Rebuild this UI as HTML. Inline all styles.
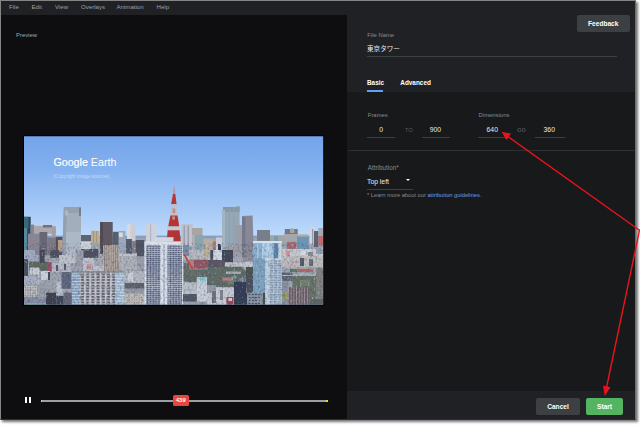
<!DOCTYPE html>
<html><head><meta charset="utf-8">
<style>
*{margin:0;padding:0;box-sizing:border-box}
html,body{width:640px;height:425px;background:#fff;overflow:hidden}
body{font-family:"Liberation Sans","Noto Sans CJK JP",sans-serif;position:relative}
#frame{position:absolute;left:0;top:0;width:636px;height:420px;background:#0e0e10;border:1px solid #858585;border-right-color:#6e6e6e;border-bottom-color:#2e2e30;box-shadow:1.5px 1.5px 2.5px rgba(0,0,0,.55);overflow:hidden}
#app{position:absolute;left:-1px;top:-1px;width:640px;height:425px}
.t{position:absolute;white-space:nowrap;line-height:1;transform:translateY(-50%)}
#menu{position:absolute;left:0;top:0;width:640px;height:15px;background:#202124}
#menu .t{color:#9aa0a6;font-size:6.1px;top:6.5px}
#right{position:absolute;left:347px;top:15px;width:293.5px;height:410px;background:#18191b}
#rhead{position:absolute;left:0;top:0;width:294px;height:76.5px;background:#202124}
#rfoot{position:absolute;left:0;top:375.5px;width:294px;height:40px;background:#202124}
.lbl{color:#868c92;font-size:5.9px}
.val{color:#e8eaed;font-size:6.8px}
.ul{position:absolute;height:1px;background:#3c4043}
.btn{position:absolute;border-radius:2px;color:#fff;font-weight:bold;font-size:6.6px;text-align:center}
</style></head><body>
<div id="frame"><div id="app">
<div id="menu">
<span class="t" style="left:9px">File</span>
<span class="t" style="left:31.5px">Edit</span>
<span class="t" style="left:55px">View</span>
<span class="t" style="left:81px">Overlays</span>
<span class="t" style="left:116.5px">Animation</span>
<span class="t" style="left:156.5px">Help</span>
</div>
<span class="t lbl" style="left:16px;top:36.3px;color:#a0a6ac">Preview</span>
<!--PHOTO_START--><svg style="position:absolute;left:0;top:0" width="640" height="425" viewBox="0 0 640 425">
<defs>
<linearGradient id="sky" x1="0" y1="136" x2="0" y2="240" gradientUnits="userSpaceOnUse">
<stop offset="0" stop-color="#73a3ea"/><stop offset=".33" stop-color="#84b1ee"/><stop offset=".62" stop-color="#9fc5f5"/><stop offset=".95" stop-color="#bcd9fb"/>
</linearGradient>
<clipPath id="pc"><rect x="24" y="136.2" width="299.2" height="168.4"/></clipPath>
<filter id="bl" x="0" y="0" width="640" height="425" filterUnits="userSpaceOnUse"><feGaussianBlur stdDeviation="0.4" result="b"/><feColorMatrix in="b" type="matrix" values="0.92 0 0 0 0  0 0.955 0 0 0  0 0 1.0 0 0.015  0 0 0 1 0" result="c"/><feTurbulence x="24" y="243" width="300" height="62" type="fractalNoise" baseFrequency="0.5 0.36" numOctaves="2" seed="7" result="n"/><feColorMatrix in="n" type="matrix" values="0 0 0 0 0.05  0 0 0 0 0.06  0 0 0 0 0.1  1.5 0 0 0 -0.68" result="na"/><feComposite in="na" in2="c" operator="in" result="nb"/><feColorMatrix x="24" y="243" width="300" height="62" in="n" type="matrix" values="0 0 0 0 .92  0 0 0 0 .94  0 0 0 0 1  0 -1.3 0 0 0.45" result="wa"/><feComposite in="wa" in2="c" operator="in" result="wb"/><feMerge><feMergeNode in="c"/><feMergeNode in="nb"/><feMergeNode in="wb"/></feMerge></filter>

<pattern id="pwhite" x="146" y="245" width="2.86" height="2.06" patternUnits="userSpaceOnUse"><rect width="2.86" height="2.06" fill="#dfe2e8"/><rect x="0.45" y="0.4" width="2.05" height="1.58" fill="#465068"/></pattern>
<pattern id="papt" x="79.7" y="272.6" width="5.2" height="2.8" patternUnits="userSpaceOnUse"><rect width="5.2" height="2.8" fill="#cfc8c6"/><rect x="1.2" y="0.9" width="3.1" height="1.7" fill="#5a6270"/></pattern>
<pattern id="pglass" x="0" y="272.6" width="4" height="2.8" patternUnits="userSpaceOnUse"><rect width="4" height="2.8" fill="#8ca6c0"/><rect width="4" height="0.8" fill="#d8e0e8"/></pattern>
<pattern id="pglass2" x="0" y="272.6" width="4" height="2.8" patternUnits="userSpaceOnUse"><rect width="4" height="2.8" fill="#a6bed0"/><rect width="4" height="0.8" fill="#dde4ea"/></pattern>
<pattern id="pbeige" x="103.4" y="245" width="2.2" height="4" patternUnits="userSpaceOnUse"><rect width="2.2" height="4" fill="#b8aa9c"/><rect x="0.7" width="0.8" height="4" fill="#978a80"/></pattern>
<pattern id="pwin2" x="24" y="286" width="2.6" height="2.8" patternUnits="userSpaceOnUse"><rect width="2.6" height="2.8" fill="#ccc8c4"/><rect x="0.6" y="0.8" width="1.2" height="1.4" fill="#7a7c84"/></pattern>
<pattern id="pwin3" x="126" y="296" width="2.4" height="2.6" patternUnits="userSpaceOnUse"><rect width="2.4" height="2.6" fill="#cac2ba"/><rect x="0.6" y="0.8" width="1.1" height="1.2" fill="#9a9088"/></pattern>
<pattern id="pwin4" x="248" y="293" width="3.2" height="3" patternUnits="userSpaceOnUse"><rect width="3.2" height="3" fill="#98a0ac"/><rect x="0.6" y="0.8" width="2" height="1.4" fill="#4a525e"/></pattern>
<pattern id="pbrown" x="288" y="287.5" width="2.7" height="3" patternUnits="userSpaceOnUse"><rect width="2.7" height="3" fill="#6a5a5a"/><rect width="0.8" height="3" fill="#b0a8a8"/><rect width="2.7" height="0.5" fill="#8a7c7c"/></pattern>
<pattern id="pwt" x="269.2" y="259.6" width="4.2" height="2.4" patternUnits="userSpaceOnUse"><rect width="4.2" height="2.4" fill="#d2dae2"/><rect x="0.5" y="0.55" width="3.4" height="1.6" fill="#869eb2"/></pattern>

</defs>
<rect x="23" y="135.2" width="301.2" height="170.4" fill="#000"/>
<g clip-path="url(#pc)">
<rect x="24" y="136" width="300" height="170" fill="url(#sky)"/>
<g filter="url(#bl)"><rect x="24.0" y="236.0" width="299.0" height="69.0" fill="#a4a8ae"/><rect x="24.0" y="235.6" width="299.0" height="2.6" fill="#8aa2bc"/><polygon points="173.7,186.2 174.6,186.2 175.3,193.9 173,193.9" fill="#b89c9c"/><polygon points="173,193.9 175.3,193.9 176.6,204.2 171.1,204.2" fill="#bc3828"/><polygon points="171.1,204.2 176.6,204.2 177.5,215.4 170.4,215.4" fill="#c6c4ca"/><rect x="172.5" y="208.5" width="2.8" height="4.6" fill="#cf9088"/><polygon points="170.4,215.4 177.5,215.4 179.3,226.5 168.2,226.5" fill="#bc3626"/><rect x="172.3" y="216.4" width="2.6" height="3.2" fill="#cc968c"/><rect x="166.7" y="226.5" width="13.3" height="3.7" fill="#ccccd2"/><polygon points="167.7,230.2 179.6,230.2 180.6,241.5 166.6,241.5" fill="#b83424"/><rect x="24.0" y="216.8" width="6.7" height="35.2" fill="#2c444c"/><rect x="24.0" y="216.8" width="4.5" height="11.2" fill="#3a6c74"/><rect x="24.0" y="228.0" width="3.2" height="23.0" fill="#5a8aa0"/><rect x="30.7" y="224.6" width="3.6" height="27.4" fill="#8a8890"/><rect x="34.3" y="225.9" width="21.4" height="7.9" fill="#b2aaa8"/><rect x="43.0" y="225.0" width="9.0" height="2.5" fill="#77747a"/><rect x="51.8" y="227.0" width="3.9" height="11.0" fill="#a8a0a0"/><rect x="28.0" y="233.6" width="12.8" height="21.4" fill="#908890"/><rect x="39.5" y="232.0" width="7.8" height="23.0" fill="#6a6a72"/><rect x="47.3" y="237.5" width="8.4" height="17.5" fill="#827a82"/><rect x="55.7" y="237.0" width="7.1" height="19.0" fill="#5a525a"/><rect x="58.0" y="240.0" width="4.5" height="11.7" fill="#c0a080"/><polygon points="63.8,207 81,207 81,256 62.2,256" fill="#a9b1b9"/><polygon points="63.8,207 66.8,207 65.6,256 62.2,256" fill="#98a2ac"/><rect x="64.5" y="207.0" width="16.5" height="6.0" fill="#9ca4ac"/><rect x="65.0" y="210.5" width="3.0" height="5.0" fill="#b4bcc2"/><rect x="79.0" y="207.5" width="2.0" height="8.5" fill="#78808a"/><rect x="66.0" y="232.0" width="15.0" height="24.0" fill="#b4bcc4"/><rect x="81.0" y="235.0" width="10.0" height="6.4" fill="#606870"/><rect x="81.0" y="241.4" width="10.0" height="7.6" fill="#d4d4d6"/><rect x="81.0" y="249.0" width="17.2" height="9.3" fill="#52525a"/><rect x="84.0" y="249.3" width="5.0" height="1.3" fill="#6aa0a0"/><rect x="91.0" y="230.8" width="8.5" height="12.0" fill="#c0b090"/><rect x="93.0" y="231.0" width="1.0" height="11.8" fill="#a89878"/><rect x="96.0" y="231.0" width="1.0" height="11.8" fill="#a89878"/><rect x="100.2" y="222.0" width="12.5" height="23.4" fill="#625a5a"/><rect x="100.2" y="222.0" width="2.8" height="31.8" fill="#524a4a"/><rect x="112.7" y="231.8" width="6.0" height="13.0" fill="#5a6268"/><rect x="118.7" y="231.0" width="6.7" height="22.8" fill="#a2aaba"/><rect x="119.0" y="232.5" width="3.8" height="4.5" fill="#e0e0e0"/><rect x="127.0" y="224.3" width="8.5" height="16.7" fill="#d2d2d2"/><rect x="127.0" y="224.3" width="3.5" height="16.7" fill="#dedede"/><rect x="126.0" y="239.0" width="5.9" height="14.8" fill="#5a5e6a"/><rect x="131.9" y="240.9" width="3.8" height="12.9" fill="#8a8088"/><rect x="135.7" y="240.0" width="8.7" height="16.4" fill="#52565e"/><rect x="146.0" y="224.3" width="10.6" height="17.7" fill="#d6d6d8"/><rect x="150.0" y="224.3" width="1.2" height="17.7" fill="#b8bcc2"/><rect x="103.4" y="245.0" width="15.3" height="26.5" fill="url(#pbeige)"/><rect x="119.0" y="253.8" width="18.0" height="17.2" fill="#b2b2b6"/><rect x="119.0" y="253.8" width="18.0" height="2.2" fill="#cacaca"/><rect x="137.0" y="256.4" width="7.5" height="15.6" fill="#a0a2a8"/><rect x="24.0" y="250.0" width="11.0" height="11.6" fill="#a6aebe"/><rect x="24.0" y="259.0" width="4.0" height="17.0" fill="#4a525a"/><rect x="29.0" y="261.6" width="19.6" height="9.1" fill="#626c58"/><rect x="39.5" y="250.0" width="5.2" height="13.0" fill="#4a4a52"/><rect x="47.3" y="262.3" width="4.5" height="9.0" fill="#a05060"/><rect x="50.0" y="250.0" width="9.0" height="7.8" fill="#52525a"/><rect x="29.8" y="267.5" width="9.7" height="7.1" fill="#d0d0d4"/><rect x="51.8" y="263.0" width="18.8" height="9.0" fill="#bcbcc4"/><rect x="56.0" y="265.0" width="2.0" height="6.0" fill="#5a5e66"/><rect x="64.0" y="264.0" width="2.0" height="6.0" fill="#5a5e66"/><rect x="59.0" y="255.0" width="16.7" height="8.0" fill="#c6c6c8"/><rect x="75.7" y="250.0" width="7.8" height="16.8" fill="#a0a0a8"/><rect x="82.9" y="257.8" width="21.1" height="13.2" fill="#c4c4cc"/><rect x="86.7" y="264.0" width="4.6" height="5.6" fill="#c4968e"/><rect x="94.0" y="258.3" width="9.4" height="7.7" fill="#a8a8b0"/><rect x="40.8" y="271.0" width="9.2" height="9.0" fill="#d2d6da"/><rect x="48.0" y="272.0" width="2.0" height="8.0" fill="#4a4e56"/><rect x="24.0" y="276.0" width="16.8" height="9.0" fill="#aeb2be"/><rect x="24.0" y="286.0" width="13.0" height="11.0" fill="url(#pwin2)"/><rect x="37.0" y="284.0" width="19.3" height="16.5" fill="#a0a4a8"/><rect x="46.0" y="292.7" width="10.3" height="12.3" fill="#42424a"/><rect x="24.0" y="297.0" width="22.0" height="8.0" fill="#8890a0"/><rect x="24.0" y="303.0" width="22.0" height="2.0" fill="#80b0a0"/><rect x="56.3" y="281.0" width="6.5" height="14.0" fill="#c0c4cc"/><rect x="61.5" y="272.0" width="9.7" height="16.8" fill="#626a7c"/><rect x="63.5" y="292.7" width="8.4" height="12.3" fill="#6a6a72"/><rect x="56.3" y="296.0" width="7.2" height="9.0" fill="#424a52"/><rect x="71.9" y="271.5" width="52.8" height="33.5" fill="url(#papt)"/><rect x="71.9" y="271.5" width="8.4" height="33.5" fill="url(#pglass)"/><rect x="116.0" y="271.5" width="8.7" height="33.5" fill="url(#pglass2)"/><rect x="71.9" y="271.3" width="52.8" height="1.3" fill="#8c8c84"/><rect x="124.7" y="271.0" width="19.8" height="12.0" fill="#b8babd"/><rect x="128.0" y="273.0" width="5.0" height="9.0" fill="#d4d4d6"/><rect x="124.7" y="283.0" width="19.8" height="5.7" fill="#62666a"/><rect x="124.7" y="288.7" width="19.8" height="4.9" fill="#9a9ca0"/><rect x="124.7" y="293.6" width="19.8" height="11.4" fill="#c8c0b8"/><rect x="126.0" y="296.0" width="17.0" height="8.0" fill="url(#pwin3)"/><rect x="144.4" y="241.5" width="38.6" height="63.5" fill="#e2e5ea"/><rect x="154.6" y="237.2" width="18.9" height="4.4" fill="#d8dbe0"/><rect x="146.0" y="245.0" width="14.3" height="60.0" fill="url(#pwhite)"/><rect x="167.5" y="245.0" width="14.4" height="60.0" fill="url(#pwhite)"/><rect x="163.6" y="245.0" width="0.8" height="60.0" fill="#9098a8"/><rect x="181.0" y="224.0" width="11.6" height="22.0" fill="#c6c6c8"/><rect x="183.5" y="225.5" width="1.5" height="20.5" fill="#a2a2aa"/><rect x="187.5" y="225.5" width="1.5" height="20.5" fill="#a2a2aa"/><rect x="192.0" y="228.0" width="10.5" height="7.5" fill="#b0a8a0"/><rect x="194.8" y="235.0" width="8.2" height="15.5" fill="#90a8a8"/><rect x="192.0" y="235.0" width="2.8" height="15.0" fill="#b4b4b6"/><rect x="203.8" y="238.8" width="9.1" height="19.2" fill="#c0b0a0"/><rect x="212.9" y="241.4" width="4.5" height="14.6" fill="#b08060"/><rect x="216.0" y="237.5" width="6.3" height="14.2" fill="#d0d0d8"/><rect x="218.0" y="244.0" width="3.0" height="6.5" fill="#303848"/><polygon points="222.3,209.7 239.6,205.8 239.6,262 222.3,262" fill="#9aaab2"/><rect x="223.0" y="207.0" width="16.6" height="5.0" fill="#8c9ca6"/><rect x="222.3" y="210.0" width="2.7" height="52.0" fill="#aab8be"/><rect x="229.0" y="208.5" width="1.0" height="53.5" fill="#93a3ab"/><rect x="233.5" y="207.5" width="1.0" height="54.5" fill="#93a3ab"/><rect x="228.4" y="245.0" width="7.1" height="12.0" fill="#a8a0a0"/><rect x="235.5" y="225.0" width="6.5" height="37.0" fill="#a0a0a8"/><polygon points="242,216 252.6,215.6 254.2,262 242,262" fill="#8c8c94"/><rect x="242.0" y="217.0" width="3.5" height="45.0" fill="#7c7c84"/><rect x="257.0" y="230.0" width="13.0" height="10.8" fill="#7c8088"/><rect x="270.0" y="235.4" width="13.5" height="6.6" fill="#a8a8a0"/><rect x="274.0" y="236.0" width="4.0" height="6.0" fill="#7aa0a8"/><rect x="284.0" y="233.5" width="13.7" height="9.5" fill="#aaaaaa"/><rect x="284.8" y="229.0" width="12.9" height="5.0" fill="#707c8c"/><rect x="290.0" y="228.5" width="4.5" height="4.5" fill="#b0a898"/><rect x="287.0" y="241.9" width="9.5" height="12.1" fill="#a87070"/><rect x="297.0" y="236.0" width="11.7" height="14.5" fill="#7098b0"/><rect x="298.0" y="234.3" width="10.0" height="2.3" fill="#b8b0a0"/><rect x="309.4" y="227.0" width="6.5" height="17.0" fill="#d8d8dc"/><rect x="312.2" y="229.0" width="1.0" height="15.0" fill="#8a8e96"/><rect x="314.0" y="231.0" width="4.4" height="16.0" fill="#606870"/><rect x="318.4" y="228.0" width="4.6" height="8.0" fill="#a8aab0"/><rect x="318.4" y="236.0" width="4.6" height="9.5" fill="#c07070"/><rect x="281.6" y="249.0" width="41.4" height="11.0" fill="#cfcdcd"/><rect x="286.0" y="251.0" width="4.0" height="5.0" fill="#d89890"/><rect x="300.0" y="250.5" width="6.0" height="4.5" fill="#e0e0e0"/><rect x="308.0" y="252.0" width="5.0" height="6.0" fill="#8a8e96"/><rect x="316.0" y="247.0" width="7.0" height="7.0" fill="#9aa4b0"/><rect x="282.0" y="256.0" width="41.0" height="11.0" fill="#c4c0bc"/><rect x="284.8" y="261.6" width="14.2" height="5.9" fill="#c8b8b8"/><rect x="300.0" y="258.0" width="4.0" height="8.0" fill="#5a5e66"/><rect x="309.0" y="259.0" width="4.0" height="7.0" fill="#70747c"/><rect x="290.0" y="269.0" width="7.7" height="3.0" fill="#5e8060"/><rect x="297.7" y="269.0" width="15.6" height="3.0" fill="#bc6a5c"/><rect x="282.0" y="272.6" width="10.6" height="8.4" fill="#626a72"/><rect x="282.0" y="275.0" width="10.6" height="1.0" fill="#c0c0c0"/><rect x="292.6" y="272.6" width="30.4" height="4.4" fill="#b0b0b0"/><rect x="292.6" y="276.0" width="30.4" height="23.0" fill="#6a7660"/><rect x="300.0" y="280.0" width="10.0" height="6.0" fill="#7c8470"/><rect x="296.0" y="290.0" width="10.0" height="4.0" fill="#58644e"/><rect x="316.0" y="268.0" width="7.0" height="37.0" fill="#86867e"/><rect x="282.0" y="281.0" width="6.7" height="24.0" fill="#9098a0"/><rect x="282.5" y="292.7" width="5.5" height="6.3" fill="#9aa050"/><rect x="288.0" y="287.5" width="21.4" height="17.5" fill="url(#pbrown)"/><rect x="309.4" y="299.0" width="13.6" height="6.0" fill="#626a62"/><rect x="183.0" y="250.0" width="31.0" height="10.0" fill="#bebec0"/><rect x="183.0" y="245.0" width="6.0" height="11.0" fill="#8090a8"/><rect x="203.8" y="250.0" width="5.7" height="8.0" fill="#c0b090"/><rect x="210.3" y="250.0" width="2.7" height="10.0" fill="#4a4e56"/><rect x="214.0" y="250.0" width="8.0" height="12.3" fill="#d8dce0"/><rect x="222.0" y="250.0" width="11.0" height="12.5" fill="#424a50"/><rect x="233.0" y="257.0" width="10.3" height="8.5" fill="#a8a8b0"/><rect x="243.3" y="257.0" width="9.7" height="6.0" fill="#989098"/><rect x="220.0" y="262.3" width="33.6" height="4.5" fill="#c6c6c6"/><rect x="245.9" y="261.6" width="6.4" height="9.7" fill="#c8d0d8"/><polygon points="183.8,263 189,263 189,269.4 207.7,269.4 207.7,260 225,260 225,266.8 240.7,266.8 246,271 246,280 236,287 198,287 183.8,281" fill="#647060"/><rect x="190.0" y="272.0" width="10.0" height="4.0" fill="#6e7868"/><rect x="204.0" y="276.0" width="10.0" height="4.0" fill="#667060"/><rect x="214.0" y="268.0" width="8.0" height="4.0" fill="#6a7464"/><rect x="228.0" y="280.0" width="8.0" height="4.0" fill="#78806e"/><rect x="207.7" y="260.0" width="17.3" height="7.0" fill="#5e5860"/><rect x="226.0" y="271.5" width="15.0" height="2.5" fill="#b0b0b0"/><rect x="222.0" y="277.5" width="11.0" height="3.0" fill="#c48484"/><rect x="231.6" y="276.5" width="5.2" height="2.0" fill="#70b0a8"/><rect x="239.4" y="277.8" width="12.9" height="4.5" fill="#808890"/><rect x="189.0" y="259.7" width="18.7" height="8.9" fill="#98585c"/><rect x="189.0" y="259.7" width="5.0" height="8.9" fill="#b08484"/><polygon points="183.3,254.5 185,254 193.6,269 191.9,269.8" fill="#d04838"/><rect x="234.0" y="281.7" width="21.0" height="23.3" fill="#384050"/><rect x="247.0" y="290.0" width="15.8" height="15.0" fill="#8e96a2"/><rect x="248.0" y="293.0" width="13.0" height="11.0" fill="url(#pwin4)"/><rect x="196.7" y="277.0" width="10.3" height="24.7" fill="#d0d4d8"/><rect x="200.0" y="277.0" width="5.8" height="5.3" fill="#8cd0dc"/><rect x="183.0" y="282.3" width="13.7" height="11.7" fill="#c0c4c8"/><rect x="183.0" y="294.0" width="13.7" height="7.7" fill="#525a62"/><rect x="183.0" y="301.7" width="24.0" height="3.3" fill="#a0a4a8"/><rect x="207.0" y="287.5" width="27.0" height="17.5" fill="#cdcdd1"/><rect x="207.0" y="285.0" width="9.0" height="8.0" fill="#9a9ea4"/><rect x="212.0" y="291.0" width="4.0" height="12.0" fill="#70767e"/><rect x="220.0" y="290.0" width="3.0" height="10.0" fill="#80868e"/><rect x="226.5" y="297.0" width="7.0" height="8.0" fill="#a24a50"/><rect x="228.5" y="298.0" width="3.5" height="3.0" fill="#d8d8d8"/><rect x="246.0" y="267.0" width="7.0" height="11.5" fill="#505848"/><rect x="246.0" y="278.5" width="7.0" height="14.2" fill="#4a525c"/><rect x="253.0" y="241.0" width="28.6" height="51.7" fill="#9cc0d8"/><rect x="253.0" y="241.0" width="9.5" height="51.7" fill="#8cb2cc"/><rect x="262.8" y="241.0" width="10.2" height="19.0" fill="#aecfe4"/><rect x="273.8" y="242.0" width="4.5" height="18.0" fill="#5c88a8"/><rect x="278.3" y="241.0" width="3.3" height="19.0" fill="#d0d8e0"/><rect x="253.0" y="241.0" width="28.6" height="2.2" fill="#dce6ee"/><rect x="257.5" y="243.0" width="0.8" height="49.7" fill="#d4e2ec"/><rect x="262.4" y="243.0" width="0.8" height="49.7" fill="#d4e2ec"/><rect x="267.6" y="243.0" width="0.8" height="17.0" fill="#dce8f0"/><rect x="253.0" y="258.4" width="12.4" height="34.3" fill="#84a6c0"/><rect x="262.8" y="292.7" width="2.6" height="12.3" fill="#4a5244"/><rect x="265.4" y="258.4" width="16.6" height="46.6" fill="url(#pwt)"/><rect x="265.4" y="258.4" width="3.8" height="46.6" fill="#c8d4dc"/><rect x="265.4" y="258.4" width="16.6" height="1.2" fill="#dfe5ea"/></g>
</g>
<text x="53.4" y="165.5" font-family="Liberation Sans, sans-serif" font-size="10.8" fill="#fff" textLength="63" lengthAdjust="spacingAndGlyphs"><tspan stroke="#fff" stroke-width=".18">Google</tspan> Earth</text>
<text x="53.6" y="177.6" font-family="Liberation Sans, sans-serif" font-size="4.8" fill="#fff" fill-opacity=".5" textLength="56" lengthAdjust="spacingAndGlyphs">[Copyright image sources]</text>
</svg><!--PHOTO_END-->
<div id="player">
<div style="position:absolute;left:25px;top:397.2px;width:1.9px;height:6px;background:#fff"></div>
<div style="position:absolute;left:28.8px;top:397.2px;width:1.9px;height:6px;background:#fff"></div>
<div style="position:absolute;left:41px;top:400px;width:286px;height:1.6px;background:#9aa0a6"></div>
<div style="position:absolute;left:40.5px;top:400px;width:1.6px;height:1.6px;background:#f5e000"></div>
<div style="position:absolute;left:326.2px;top:400px;width:1.6px;height:1.6px;background:#f5e000"></div>
<div style="position:absolute;left:173px;top:395.3px;width:15.5px;height:10.7px;background:#e8453c;border-radius:1.5px;color:#fff;font-weight:bold;font-size:5.9px;text-align:center;line-height:10.7px">439</div>
</div>
<div id="right">
<div id="rhead"></div>
<div id="rfoot"></div>
</div>
<span class="t lbl" style="left:367.3px;top:35.6px">File Name</span>
<span class="t val" style="left:367px;top:48.6px;font-size:6.6px">東京タワー</span>
<div class="ul" style="left:367px;top:55.5px;width:250px"></div>
<span class="t val" style="left:367px;top:83.2px;font-weight:bold;font-size:6.4px;color:#fff">Basic</span>
<span class="t val" style="left:400.3px;top:83.2px;font-weight:bold;font-size:6.4px;color:#fff">Advanced</span>
<div style="position:absolute;left:367px;top:90.3px;width:16.3px;height:1.3px;background:#669df6"></div>
<div class="btn" style="left:577px;top:15px;width:52.5px;height:17px;background:#3c4043;line-height:17px">Feedback</div>

<span class="t lbl" style="left:367.8px;top:116.3px">Frames</span>
<span class="t val" style="left:379.3px;top:130.4px">0</span>
<div class="ul" style="left:367.2px;top:136.5px;width:28px"></div>
<span class="t lbl" style="left:404.8px;top:130.7px;color:#54585c">TO</span>
<span class="t val" style="left:429.8px;top:130.4px">900</span>
<div class="ul" style="left:421.8px;top:136.5px;width:28px"></div>
<span class="t lbl" style="left:478.6px;top:116.3px">Dimensions</span>
<span class="t val" style="left:486.6px;top:130.4px">640</span>
<div class="ul" style="left:477.8px;top:136.5px;width:28px"></div>
<svg style="position:absolute;left:516.8px;top:127.7px" width="9" height="4.4" viewBox="0 0 14 8" preserveAspectRatio="none"><g fill="none" stroke="#54585c" stroke-width="1.5"><path d="M6 1H4a3 3 0 0 0 0 6h2M8 1h2a3 3 0 0 1 0 6H8M4.5 4h5"/></g></svg>
<span class="t val" style="left:543.6px;top:130.4px">360</span>
<div class="ul" style="left:535px;top:136.5px;width:29.7px"></div>
<div class="ul" style="left:347.5px;top:150px;width:290px;background:#2e3033"></div>
<span class="t lbl" style="left:367.8px;top:167.5px;font-size:6.3px">Attribution*</span>
<span class="t val" style="left:367px;top:181.5px">Top left</span>
<div style="position:absolute;left:405.6px;top:179.2px;width:0;height:0;border-left:2.2px solid transparent;border-right:2.2px solid transparent;border-top:2.6px solid #fff"></div>
<div class="ul" style="left:367px;top:189px;width:46px"></div>
<span class="t lbl" style="left:367px;top:196.3px;font-size:5.72px">* Learn more about our <span style="color:#669df6">attribution guidelines</span>.</span>

<div class="btn" style="left:536px;top:398px;width:44px;height:17px;background:#3c4043;line-height:17px">Cancel</div>
<div class="btn" style="left:585.8px;top:398px;width:37.5px;height:17px;background:#55b461;line-height:17px">Start</div>


</div></div>
<!--ARROWS--><svg style="position:absolute;left:0;top:0" width="640" height="425" viewBox="0 0 640 425">
<g stroke="#e8141c" stroke-width="1.4" fill="none" stroke-linecap="round">
<line x1="639.5" y1="230.3" x2="506" y2="135.3"/>
<line x1="639.5" y1="230.3" x2="606.2" y2="389"/>
</g>
<g fill="#e8141c">
<polygon points="501.6,131.8 511,133.6 506.5,140.2"/>
<polygon points="604.8,396 603,385.5 610.5,387.2"/>
</g>
</svg>
</body></html>
